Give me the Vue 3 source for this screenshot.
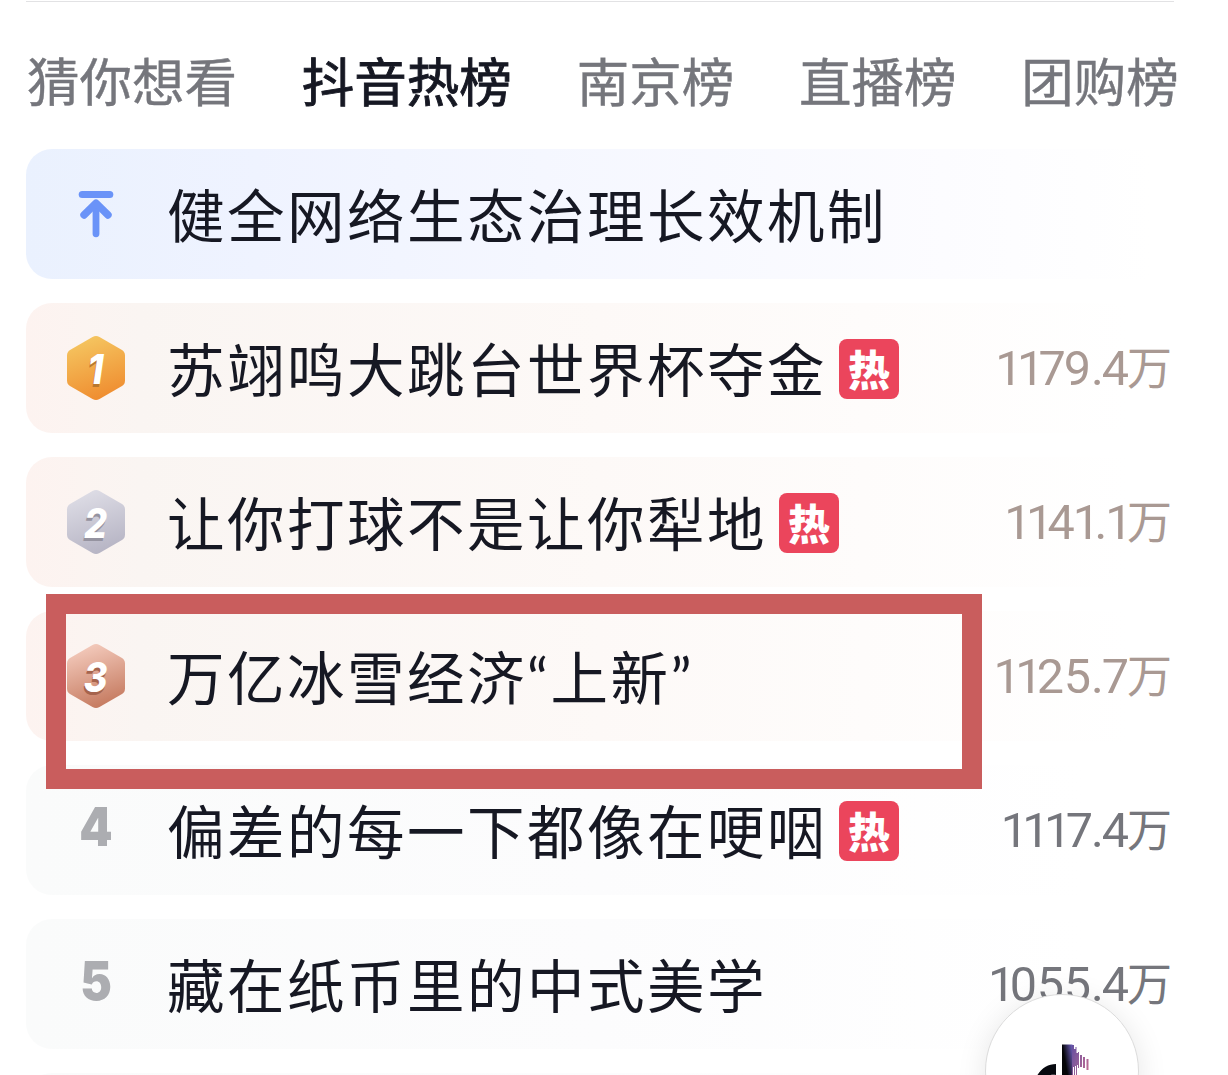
<template>
  <main class="hot-page">
    <nav class="tabs">
      <a v-for="tab in tabs" :key="tab" class="tab" :class="{ active: tab === activeTab }" @click="activeTab = tab">{{ tab }}</a>
    </nav>

    <ul class="hot-list">
      <li v-for="item in items" :key="item.title" class="hot-row" :class="item.theme">
        <div class="rank">
          <svg v-if="item.rank === 'top'" class="top-icon" viewBox="0 0 40 50" fill="none" stroke="#6a93f8" stroke-linecap="round" stroke-linejoin="round">
            <path d="M6.2 5.6H33.8" stroke-width="7" />
            <path d="M20 15V44.8" stroke-width="6.8" />
            <path d="M8 26L20 14.2L32 26" stroke-width="7.4" />
          </svg>
          <svg v-else-if="item.medal" class="medal" viewBox="0 0 60 66">
            <defs>
              <linearGradient :id="'medal-' + item.rank" x1="0.35" y1="0" x2="0.65" y2="1">
                <stop offset="0" :stop-color="item.medal[0]" />
                <stop offset="1" :stop-color="item.medal[1]" />
              </linearGradient>
            </defs>
            <path d="M26.5 2Q30 0 33.5 2L56 15Q59 17 59 20.5V45.5Q59 49 56 51L33.5 64Q30 66 26.5 64L4 51Q1 49 1 45.5V20.5Q1 17 4 15Z" :fill="`url(#medal-${item.rank})`" />
            <text class="medal-num" transform="translate(29.5 48.5) scale(0.88 1)" fill="#fff" :style="{ textShadow: `-1px 3px 0 ${item.medal[2]}` }">{{ item.rank }}</text>
          </svg>
          <span v-else class="rank-num">{{ item.rank }}</span>
        </div>
        <span class="title">{{ item.title }}</span>
        <span v-if="item.hot" class="hot-tag">热</span>
        <span v-if="item.count" class="count"><span v-for="(ch, i) in item.count" :key="i" :class="{ one: ch === '1', wide: '0259'.includes(ch) }">{{ ch }}</span><span class="unit">万</span></span>
      </li>
      <li class="hot-row plain"></li>
    </ul>

    <div class="highlight"></div>

    <button class="float-btn">
      <svg viewBox="0 0 76 84">
        <defs>
          <linearGradient id="stem" x1="0" y1="0.75" x2="1" y2="0">
            <stop offset="0.35" stop-color="#050507" />
            <stop offset="1" stop-color="#7262c4" />
          </linearGradient>
          <linearGradient id="flag" x1="0" y1="0" x2="1" y2="1">
            <stop offset="0" stop-color="#6550a0" />
            <stop offset="1" stop-color="#dc7590" />
          </linearGradient>
        </defs>
        <path d="M32 20V31C24 29 18 36 18 42S24 55 31 55S43 49 43 42V32L8 48C10 30 20 20 32 20Z" fill="#07090f" />
        <path d="M38 0.5H48.5V42H38Z" fill="url(#stem)" />
        <path d="M48 1H50V5H51.5V3H52.5V9H54V8H55V24H54V21H53V50H52V22H51V50H50V23H49V50H48ZM56 11H58V23H56ZM59 13H61V24H59ZM62.5 15H64.5V26H62.5Z" fill="url(#flag)" />
      </svg>
    </button>
  </main>
</template>

<script setup>
import { ref } from 'vue';

const tabs = ['猜你想看', '抖音热榜', '南京榜', '直播榜', '团购榜'];
const activeTab = ref('抖音热榜');

// medal: top colour, bottom colour, digit shadow
const items = [
  { rank: 'top', title: '健全网络生态治理长效机制', theme: 'blue' },
  { rank: '1', title: '苏翊鸣大跳台世界杯夺金', count: '1179.4', hot: true, theme: 'warm', medal: ['#f5c661', '#ef8b2e', '#b9782f'] },
  { rank: '2', title: '让你打球不是让你犁地', count: '1141.1', hot: true, theme: 'warm', medal: ['#dedde6', '#b5b3c3', '#9593a0'] },
  { rank: '3', title: '万亿冰雪经济“上新”', count: '1125.7', theme: 'warm', medal: ['#f4cbbd', '#c4785d', '#a6644d'] },
  { rank: '4', title: '偏差的每一下都像在哽咽', count: '1117.4', hot: true, theme: 'plain' },
  { rank: '5', title: '藏在纸币里的中式美学', count: '1055.4', theme: 'plain' },
];
</script>

<style>
body { background: #fff; overflow: hidden; }
</style>

<style scoped>
.hot-page {
  position: relative; box-sizing: border-box; width: 1228px; height: 1075px; padding: 1px 54px 0 26px; overflow: hidden; background: #fff;
  font-family: 'Noto Sans CJK SC', sans-serif; color: #161823;
}
.tabs {
  display: flex; gap: 64.8px; box-sizing: border-box; height: 148px; padding-top: 39px; border-top: 1px solid #e2e2e4; white-space: nowrap;
}
.tab { font-size: 52.5px; line-height: 76px; color: #75767c; -webkit-text-stroke: 0.4px #75767c; cursor: pointer; }
.tab:first-child { margin-left: 1px; }
.tab.active { color: #161823; -webkit-text-stroke: 0.9px #161823; }

.hot-list { display: flex; flex-direction: column; gap: 24px; margin: 0; padding: 0; list-style: none; }
.hot-row { display: flex; flex: none; align-items: center; box-sizing: border-box; height: 130px; padding-right: 2px; border-radius: 26px; }
.blue { background: linear-gradient(90deg, #eaf1fe, #eff3ff 20%, #f5f7ff 45%, #fcfcff 80%, #fff 98%); }
.warm { background: linear-gradient(90deg, #fdf3f0, #faf5f2 10%, #fdf9f7 50%, #fff 96%); }
.plain { background: linear-gradient(90deg, #fafbfb, #fcfcfd 50%, #fff 92%); }

.rank { display: flex; flex: none; justify-content: center; width: 140px; }
.top-icon { width: 40px; height: 50px; }
.medal { width: 60px; height: 66px; }
.medal-num { font: italic 800 41px Inter, sans-serif; text-anchor: middle; }
.rank-num { font: 900 54px/60px Inter, sans-serif; color: #acadb1; padding-bottom: 6px; transform: scaleX(0.88); }
.title { margin-left: 1px; padding-top: 4px; font-family: Lato, 'Noto Sans CJK SC', sans-serif; font-size: 57.5px; line-height: 84px; letter-spacing: 2.5px; white-space: nowrap; }
.hot-tag {
  display: flex; flex: none; align-items: center; justify-content: center; box-sizing: border-box; width: 60px; height: 60px; margin: 2px 0 0 12px; padding-bottom: 3px; border-radius: 8px;
  background: #eb455c; color: #fff; font-size: 42px; font-weight: 900; line-height: 57px;
}
.count { display: flex; align-items: baseline; margin-left: auto; padding-bottom: 2px; font: 400 48.5px/60px Roboto, sans-serif; letter-spacing: -2px; color: #75767c; }
.warm .count { color: #a99993; }
.count .one { letter-spacing: -5.6px; }
.count .wide { letter-spacing: -0.2px; }
.count .unit { font: 400 45px/60px 'Noto Sans CJK SC', sans-serif; letter-spacing: 0; }

.highlight { position: absolute; left: 46px; top: 594px; box-sizing: border-box; width: 936px; height: 195px; border: 20px solid #c95d5d; }
.float-btn {
  position: absolute; left: 985px; top: 994px; display: flex; align-items: flex-start; justify-content: center; box-sizing: border-box; width: 154px; height: 154px;
  padding: 49px 0 0; border: 1px solid #dcdcdc; border-radius: 50%; background: #fff; box-shadow: 0 4px 30px rgba(0, 0, 0, 0.1);
}
.float-btn svg { flex: none; width: 76px; height: 84px; }
</style>
